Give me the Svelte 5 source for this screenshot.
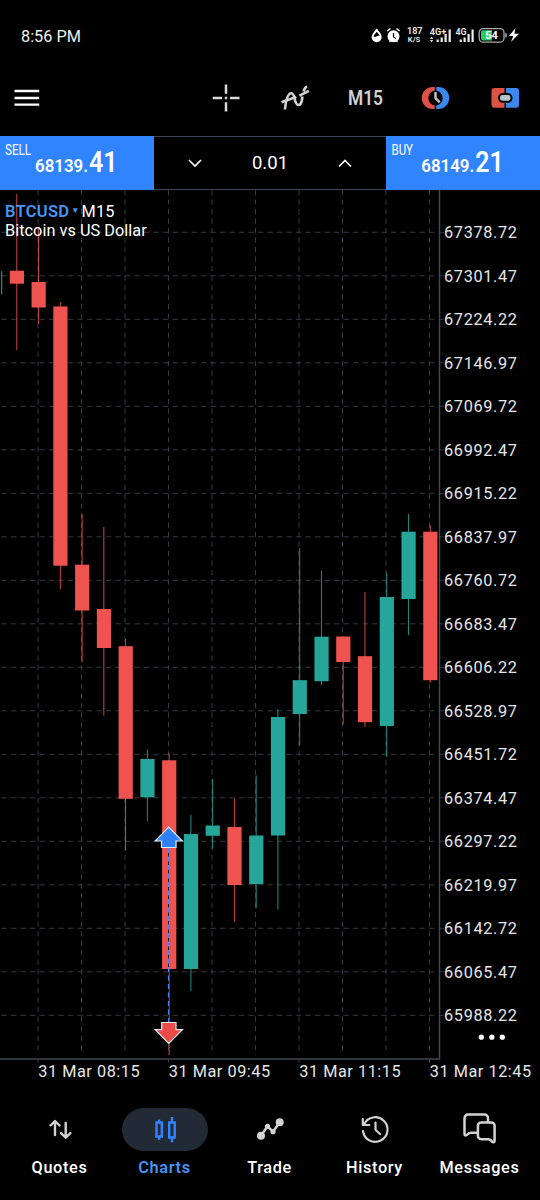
<script>
  const step = 21.76;
  const firstX = 16.8;

  // open/close edges of the body, then high and low of the wick
  const candles = [
    { up: false, top: 80.7, bottom: 93.7, high: 4, low: 160 },
    { up: false, top: 92, bottom: 117.5, high: 37, low: 134 },
    { up: false, top: 116.5, bottom: 375.7, high: 112, low: 399 },
    { up: false, top: 374.7, bottom: 420.5, high: 324, low: 472.3 },
    { up: false, top: 419, bottom: 458, high: 337, low: 525.5 },
    { up: false, top: 456.2, bottom: 608.8, high: 449, low: 660.5 },
    { up: true, top: 569, bottom: 607.3, high: 559, low: 631.3 },
    { up: false, top: 570.3, bottom: 779, high: 563, low: 865 },
    { up: true, top: 644, bottom: 779, high: 625, low: 801 },
    { up: true, top: 635.5, bottom: 645.8, high: 589, low: 658.7 },
    { up: false, top: 637, bottom: 695, high: 608.5, low: 731.8 },
    { up: true, top: 645.5, bottom: 694, high: 585.5, low: 718 },
    { up: true, top: 527, bottom: 645.5, high: 519, low: 719.7 },
    { up: true, top: 490.2, bottom: 524, high: 358, low: 555.5 },
    { up: true, top: 446.7, bottom: 491.2, high: 380.7, low: 495.5 },
    { up: false, top: 446.5, bottom: 472, high: 446.5, low: 534.5 },
    { up: false, top: 466.2, bottom: 532.2, high: 402, low: 537 },
    { up: true, top: 407, bottom: 536, high: 383, low: 567 },
    { up: true, top: 341.7, bottom: 409, high: 324, low: 445 },
    { up: false, top: 341.7, bottom: 490.2, high: 335, low: 493 }
  ];

  const prices = Array.from({ length: 19 }, (_, i) => (67378.72 - i * 77.25).toFixed(2));
  const columns = Array.from({ length: 10 }, (_, i) => 38 + i * 43.5);
  const dates = ['31 Mar 08:15', '31 Mar 09:45', '31 Mar 11:15', '31 Mar 12:45'];

  const tabs = ['Quotes', 'Charts', 'Trade', 'History', 'Messages'];
  let active = 'Charts';
</script>

<div class="app">
  <div class="status">
    <span>8:56 PM</span>
    <svg width="155" height="20" viewBox="368 25 155 20">
      <path d="M376.7 28.5c2.4 3.2 5 5.600 5 8.600a5 5 0 0 1-10.100 0c0-3 2.700-5.400 5.100-8.600z" fill="#fff" />
      <path d="M373.500 36.700c.5-2 2-3.500 3.200-5 1.200 1.500 2.400 2.700 3 4.200-2-.9-3.800 1.600-6.200.8z" fill="#000" />
      <circle cx="393.500" cy="36.300" r="6" fill="#fff" />
      <path d="M387.300 31l3.200-2.500M399.700 31l-3.200-2.500M389.500 42l1-1M397.500 42l-1-1" stroke="#fff" stroke-width="1.500" />
      <path d="M393.500 33v4l2.500 1.500" stroke="#000" stroke-width="1.200" fill="none" />
      <g class="tiny">
        <text x="407" y="33.600" font-size="9.500" textLength="15.500" lengthAdjust="spacingAndGlyphs">187</text>
        <text x="407.800" y="41.500" font-size="8" textLength="12.500" lengthAdjust="spacingAndGlyphs">K/S</text>
        <text x="429.700" y="34.800" font-size="9.500" textLength="16.500" lengthAdjust="spacingAndGlyphs">4G+</text>
        <text x="455.500" y="34.800" font-size="9.500" textLength="11" lengthAdjust="spacingAndGlyphs">4G</text>
      </g>
      <path d="M429.800 39l1.800-2.300 1.800 2.300zM429.800 40l1.800 2.300 1.800-2.300z" fill="#ddd" />
      <path
        d="M437.700 42v-2.500M441.700 42v-4.500M445.600 42v-8M449.700 42v-12.500M460.700 42v-2.500M464.600 42v-4.500M468.600 42v-8M472.600 42v-12.500"
        stroke="#eee"
        stroke-width="2.200"
      />
      <rect class="battery" x="479.200" y="28.600" width="24.800" height="13.600" rx="4" />
      <path d="M483 30.200h9v10.300h-9a2 2 0 0 1-2-2v-6.300a2 2 0 0 1 2-2z" fill="#2bc866" />
      <path d="M506 33.200v4.300" stroke="#aaa" stroke-width="1.600" />
      <text class="charge" x="485.300" y="39.300" textLength="12.500">54</text>
      <path d="M515.500 28l-6.500 8h4.300l-2.300 6 8-8.200h-4.600z" fill="#fff" />
    </svg>
  </div>

  <div class="toolbar">
    <button class="menu" aria-label="Menu">
      <svg width="26" height="20" viewBox="0 0 26 20" stroke="#fff" stroke-width="2.300">
        <path d="M.5 3h24.700M.5 10h24.700M.5 16.700h24.700" />
      </svg>
    </button>
    <button aria-label="Crosshair">
      <svg width="30" height="30" viewBox="-15 -15 30 30" stroke="#d8d8d8" stroke-width="2.500">
        <path d="M-12.300 0h9.300M5 0h9.500M1-13.500v9.300M1 4.200v9.300M-.2 0h2.400" />
      </svg>
    </button>
    <button aria-label="Indicators">
      <svg width="30" height="30" viewBox="280 83 30 30" fill="none" stroke="#d2d2d2" stroke-width="2.600">
        <path d="M285 109.500C285.500 104 287 93.500 291.300 93.200C295.500 93 294 105 298.200 105C302.400 105 301.800 99 302.500 96.500" />
        <path d="M281.500 102.200l14.800-5.300M299.500 95.600l9.400-4.800M303.500 91.500c1-2.800 2-4.500 3.500-5" />
      </svg>
    </button>
    <button aria-label="Timeframe">
      <svg width="50" height="30">
        <text class="timeframe" x="8" y="22.200" textLength="35" lengthAdjust="spacingAndGlyphs">M15</text>
      </svg>
    </button>
    <button aria-label="Sessions">
      <svg width="30" height="26" viewBox="420 85 30 26">
        <path d="M434.800 87v3.400a7.700 7.700 0 0 0 0 15.200v3.400h-2c-6.300 0-11-4.800-11-11s4.700-11 11-11z" fill="#de5246" />
        <path d="M436.200 87v3.400a7.700 7.700 0 0 1 0 15.200v3.400h2c6.300 0 11-4.800 11-11s-4.700-11-11-11z" fill="#3b88ee" />
        <path d="M435.500 92v6l4.200 4.400" fill="none" stroke="#b4c3cd" stroke-width="2.500" />
      </svg>
    </button>
    <button aria-label="New order">
      <svg width="30" height="26" viewBox="490 85 30 26">
        <path d="M494.500 88h10v19.700h-10a3 3 0 0 1-3-3v-13.700a3 3 0 0 1 3-3z" fill="#de5246" />
        <path d="M506 88h10a3 3 0 0 1 3 3v13.700a3 3 0 0 1-3 3h-10z" fill="#3b88ee" />
        <rect x="499" y="94" width="12.500" height="7.800" rx="3.700" fill="#b4c3cd" stroke="#000" stroke-width="2" />
      </svg>
    </button>
  </div>

  <div class="deal">
    <button class="quote" aria-label="Sell">
      <svg width="154" height="53">
        <text class="side" x="5" y="17.500" textLength="26" lengthAdjust="spacingAndGlyphs">SELL</text>
        <text class="whole" x="35" y="35" textLength="53" lengthAdjust="spacingAndGlyphs">68139.</text>
        <text class="points" x="89" y="35" textLength="28.500" lengthAdjust="spacingAndGlyphs">41</text>
      </svg>
    </button>
    <div class="volume">
      <svg width="14" height="9" viewBox="0 0 14 9"><path d="M1 1l6 6 6-6" /></svg>
      <span>0.01</span>
      <svg width="14" height="9" viewBox="0 0 14 9"><path d="M1 7.500l6-6 6 6" /></svg>
    </div>
    <button class="quote" aria-label="Buy">
      <svg width="154" height="53">
        <text class="side" x="5.500" y="17.500" textLength="21.500" lengthAdjust="spacingAndGlyphs">BUY</text>
        <text class="whole" x="35.300" y="35" textLength="53" lengthAdjust="spacingAndGlyphs">68149.</text>
        <text class="points" x="89.200" y="35" textLength="28.500" lengthAdjust="spacingAndGlyphs">21</text>
      </svg>
    </button>
  </div>

  <svg class="chart" width="540" height="900" viewBox="0 0 540 900">
    <g class="grid">
      {#each prices as _, i}
        <line x1="1.500" x2="444" y1={42.3 + i * 43.5} y2={42.3 + i * 43.5} />
      {/each}
      {#each columns as x}
        <line x1={x} x2={x} y1="0" y2="865" />
      {/each}
    </g>

    <line class="up" x1="1.700" x2="1.700" y1="81" y2="104.500" />
    {#each candles as c, i}
      <g class={c.up ? 'up' : 'down'}>
        <line x1={firstX + i * step} x2={firstX + i * step} y1={c.high} y2={c.low} />
        <rect x={firstX + i * step - 7} y={c.top} width="14.200" height={c.bottom - c.top} />
      </g>
    {/each}

    <path d="M168.500 658V832" stroke="#241b24" />
    <path d="M168.500 658V832" stroke="#4a83ff" stroke-width="1.200" stroke-dasharray="5 3.500" />
    <path class="marker" d="M168.700 637.200L182.300 651H176V657.500H161.500V651H155.200Z" fill="#2f80fb" />
    <path class="marker" d="M161.700 832.500H176V839.700H182.500L168.700 853.500L155.200 839.700H161.700Z" fill="#eb4b48" />

    <path class="axis" d="M0 869H439.500V0" />
    {#each dates as date, i}
      <line x1={38 + i * 130.5} x2={38 + i * 130.5} y1="870" y2="872.500" stroke="#3a4249" />
      <text class="label" x={38.2 + i * 130.5} y="887" textLength="101.500">{date}</text>
    {/each}
    {#each prices as price, i}
      <text class="label" x="444" y={48.3 + i * 43.5} textLength="73">{price}</text>
    {/each}

    <text class="symbol" x="5" y="27" textLength="64">BTCUSD</text>
    <path d="M72.700 18.300h5l-2.500 5z" fill="#4595f7" />
    <text class="title" x="81.500" y="27" textLength="33">M15</text>
    <text class="title" x="5" y="46" textLength="141.700">Bitcoin vs US Dollar</text>

    <g fill="#fff">
      <circle cx="481.300" cy="847.200" r="2.600" />
      <circle cx="491.800" cy="847.200" r="2.600" />
      <circle cx="502.300" cy="847.200" r="2.600" />
    </g>
  </svg>

  <nav>
    {#each tabs as tab}
      <button class="tab" class:active={tab === active} onclick={() => (active = tab)}>
        <span class="pill">
          <svg width="40" height="40" viewBox="-20 -19.500 40 40">
            {#if tab === 'Quotes'}
              <path d="M-5 5.500V-8M-9.500-4l4.500-4.500L-.5-4M5.700-6.500V7.500M1 3.700l4.700 4.500 4.700-4.500" stroke-width="2.400" />
            {:else if tab === 'Charts'}
              <path d="M-8.500-7h5.300V7h-5.300zM-5.900-10v3M-5.900 7v3.200M4.200-7h5.500V8h-5.500zM7-12.500v5.500M7 8v4.800" stroke-width="2.400" />
            {:else if tab === 'Trade'}
              <path d="M-9 6.200L-2.500-3.200L3 2.200L9.700-7.200" stroke-width="2.400" />
              <g fill="#d2d2d2" stroke="none">
                <circle cx="-9" cy="6.200" r="4" />
                <circle cx="-2.500" cy="-3.200" r="2.600" />
                <circle cx="3" cy="2.200" r="2.600" />
                <circle cx="9.700" cy="-7.200" r="4" />
              </g>
            {:else if tab === 'History'}
              <path d="M-12.200-10.500v6h6.500M-11-5A12.300 12.300 0 1 1-12 1.500M.5-7v7.300l4.500 4.200" stroke-width="2.200" />
            {:else}
              <path d="M8-7.500v-4a3.500 3.500 0 0 0-3.500-3.500H-12a3.500 3.500 0 0 0-3.500 3.500V4.500q0 2 2 1.200c2-2 2.500-2.400 4.500-2.400h6" stroke-width="2.500" />
              <path d="M1.200-7H11.300a3.300 3.300 0 0 1 3.300 3.300V11.500q-.5 2.200-2.400.8c-1.300-2-2-2.600-4-2.600h-7a3.300 3.300 0 0 1-3.300-3.300V-3.700a3.300 3.300 0 0 1 3.300-3.300z" stroke-width="2.500" />
            {/if}
          </svg>
        </span>
        <span class="name">{tab}</span>
      </button>
    {/each}
  </nav>
</div>

<style>
  :global(body) {
    background: #000;
  }
  .app {
    width: 540px;
    height: 1200px;
    display: flex;
    flex-direction: column;
    background: #000;
    color: #fff;
    font-family: Roboto, sans-serif;
    overflow: hidden;
  }
  button {
    padding: 0;
    border: none;
    background: none;
    color: inherit;
    font-family: inherit;
    cursor: pointer;
  }
  svg {
    display: block;
    flex: none;
  }
  .status {
    height: 70px;
    padding: 0 17px 0 21px;
    box-sizing: border-box;
    display: flex;
    align-items: center;
    justify-content: space-between;
    font-size: 16.3px;
    color: #f0f0f0;
  }
  .status span {
    padding-top: 3px;
  }
  .tiny {
    fill: #eee;
    font-weight: 600;
  }
  .battery {
    fill: #000;
    stroke: #aaa;
    stroke-width: 1.3;
  }
  .charge {
    fill: #fff;
    font-size: 11px;
    font-weight: 700;
  }
  .toolbar {
    height: 66px;
    padding-bottom: 10px;
    box-sizing: border-box;
    display: grid;
    grid-template-columns: 1fr repeat(5, 70px);
    align-items: center;
  }
  .toolbar button {
    display: flex;
    justify-content: center;
  }
  .toolbar .menu {
    justify-content: flex-start;
    padding-left: 14px;
  }
  .timeframe {
    fill: #d2d2d2;
    font-size: 20.5px;
    font-weight: 600;
  }
  .deal {
    height: 54px;
    display: grid;
    grid-template-columns: 154px 1fr 154px;
  }
  .quote {
    background: #3184ff;
    overflow: hidden;
  }
  .quote text {
    fill: #fff;
  }
  .side {
    font-size: 14.5px;
  }
  .whole {
    font-size: 18.7px;
    font-weight: 600;
  }
  .points {
    font-size: 29px;
    font-weight: 600;
  }
  .volume {
    display: flex;
    align-items: center;
    justify-content: space-between;
    padding: 0 34px;
    border-top: 1px solid #3c4855;
    border-bottom: 1px solid #3c4855;
    font-size: 18.5px;
  }
  .volume path {
    fill: none;
    stroke: #fff;
    stroke-width: 1.6;
  }
  .chart {
    height: 900px;
  }
  .grid line {
    stroke: #343a40;
    stroke-dasharray: 5.3 4.2;
  }
  .up {
    stroke: #26a69a;
    fill: #26a69a;
  }
  .down {
    stroke: #ef5350;
    fill: #ef5350;
  }
  .up line,
  .down line {
    stroke-opacity: 0.85;
  }
  .up rect,
  .down rect {
    stroke: none;
  }
  .marker {
    stroke: #e4eaf2;
    stroke-width: 1.2;
  }
  .axis {
    fill: none;
    stroke: #40474e;
    stroke-width: 1.5;
  }
  .label {
    fill: #e6e6e6;
    font-size: 16.3px;
  }
  .title {
    fill: #fff;
    font-size: 16.3px;
  }
  .symbol {
    fill: #4595f7;
    font-size: 16.5px;
    font-weight: 600;
  }
  nav {
    height: 110px;
    padding: 18px 8px 0 7px;
    box-sizing: border-box;
    display: grid;
    grid-template-columns: repeat(5, 1fr);
  }
  .tab {
    display: flex;
    flex-direction: column;
    align-items: center;
    gap: 7px;
  }
  .pill {
    width: 86px;
    height: 43px;
    border-radius: 22px;
    display: flex;
    align-items: center;
    justify-content: center;
  }
  .pill svg {
    fill: none;
    stroke: #d2d2d2;
    stroke-linecap: round;
    stroke-linejoin: round;
  }
  .name {
    font-size: 16.3px;
    line-height: 20px;
    font-weight: 500;
    letter-spacing: 0.65px;
  }
  .active .pill {
    background: #222a35;
  }
  .active .pill svg {
    stroke: #3184ff;
    stroke-linecap: butt;
    stroke-linejoin: miter;
  }
  .active .name {
    color: #4595f7;
    font-weight: 600;
  }
</style>
